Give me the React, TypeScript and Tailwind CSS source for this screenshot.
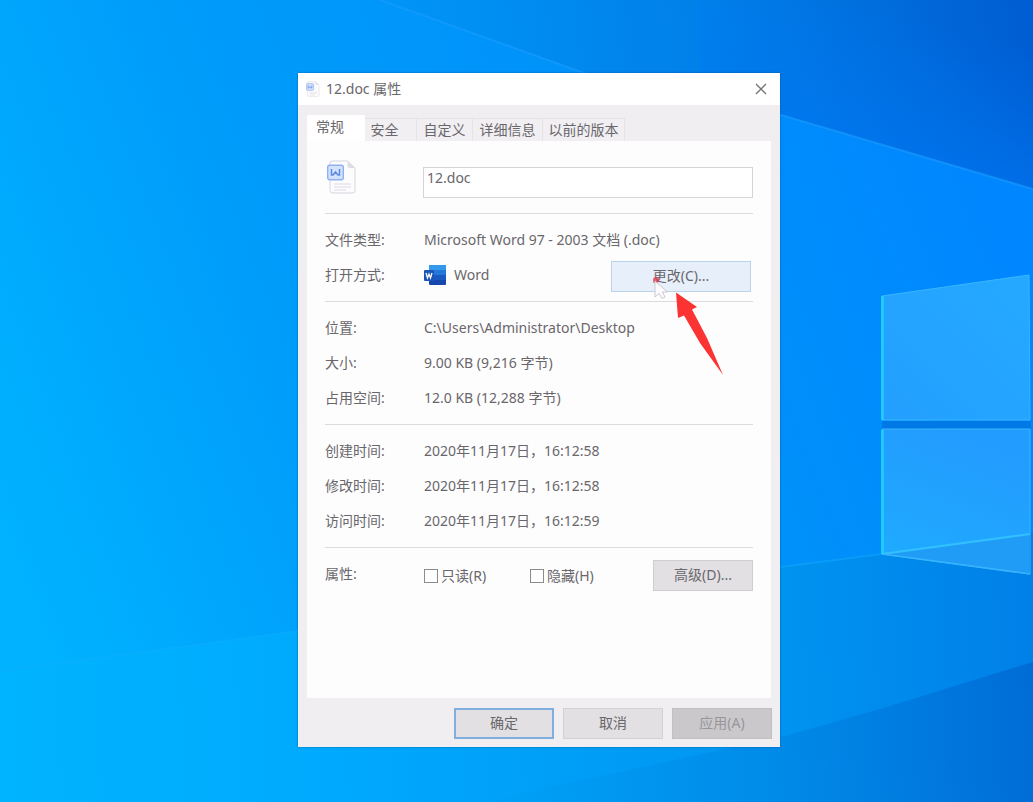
import { useState } from "react";

const tabs = [
  { name: "常规", width: "w-[58px]" },
  { name: "安全", width: "w-[52px]" },
  { name: "自定义", width: "w-14" },
  { name: "详细信息", width: "w-[70px]" },
  { name: "以前的版本", width: "w-[82px]" },
];

function Wallpaper() {
  return (
    <svg
      className="absolute inset-0 h-full w-full"
      viewBox="0 0 1033 802"
      preserveAspectRatio="none"
      aria-hidden="true"
    >
      <defs>
        <linearGradient id="sky" x1="0" y1="0.65" x2="1" y2="0.35">
          <stop offset="0" stopColor="#00b2ff" />
          <stop offset="0.3" stopColor="#009dfa" />
          <stop offset="0.7" stopColor="#0091fa" />
          <stop offset="1" stopColor="#0086ff" />
        </linearGradient>
        <linearGradient id="upper" gradientUnits="userSpaceOnUse" x1="400" y1="80" x2="1033" y2="0">
          <stop offset="0" stopColor="#0095f6" />
          <stop offset="0.5" stopColor="#007fe9" />
          <stop offset="1" stopColor="#005cd2" />
        </linearGradient>
        <linearGradient id="upperGlow" gradientUnits="userSpaceOnUse" x1="920" y1="20" x2="880" y2="180">
          <stop offset="0" stopColor="#0078f4" stopOpacity="0" />
          <stop offset="1" stopColor="#0078f4" stopOpacity="0.7" />
        </linearGradient>
        <linearGradient id="lower" gradientUnits="userSpaceOnUse" x1="0" y1="700" x2="1033" y2="660">
          <stop offset="0" stopColor="#00b4ff" />
          <stop offset="0.35" stopColor="#00a8fd" />
          <stop offset="0.75" stopColor="#0094f0" />
          <stop offset="1" stopColor="#0080e8" />
        </linearGradient>
        <linearGradient id="floor" gradientUnits="userSpaceOnUse" x1="480" y1="780" x2="1033" y2="740">
          <stop offset="0" stopColor="#00a2f8" />
          <stop offset="0.55" stopColor="#008ae8" />
          <stop offset="1" stopColor="#006dd6" />
        </linearGradient>
        <linearGradient id="paneTop" x1="0" y1="1" x2="1" y2="0">
          <stop offset="0" stopColor="#239fff" />
          <stop offset="1" stopColor="#25a9ff" />
        </linearGradient>
        <linearGradient id="paneBottom" x1="0" y1="1" x2="0.4" y2="0">
          <stop offset="0" stopColor="#1eacff" />
          <stop offset="1" stopColor="#239cff" />
        </linearGradient>
      </defs>
      <rect width="1033" height="802" fill="url(#sky)" />
      <path d="M380 0H1033V189L781 115L640 93Z" fill="url(#upper)" />
      <path d="M700 0H1033V189L781 115L700 102Z" fill="url(#upperGlow)" />
      <path d="M380 0L640 93L781 115L1033 189" fill="none" stroke="#1a9cff" strokeWidth="2" opacity="0.6" />
      <path d="M0 671L298 631L781 567L882 554L1033 533V802H0Z" fill="url(#lower)" />
      <path d="M0 671L298 631L781 567L882 554" fill="none" stroke="#12b0ff" strokeWidth="2" opacity="0.4" />
      <path d="M480 802L781 737L880 709L1033 662V802Z" fill="url(#floor)" />
      <path d="M882 421H1031V429H882Z" fill="#0078e6" />
      <path d="M882 296L1029 275L1030 420H882Z" fill="url(#paneTop)" stroke="#38b6ff" strokeWidth="1" />
      <path d="M882 429H1030V574L882 554Z" fill="url(#paneBottom)" stroke="#38b6ff" strokeWidth="1" />
      <path d="M882 554L1030 534V574Z" fill="#209cf6" />
      <path d="M882 554L1030 534" stroke="#32c0ff" strokeWidth="2" />
      <path d="M882 554L1030 574" stroke="#38b4ff" strokeWidth="1.5" />
      <path d="M882.500 296V420M882.500 430V554" stroke="#22d0ff" strokeWidth="2.500" />
    </svg>
  );
}

function DocIcon({ className }: { className: string }) {
  return (
    <svg className={className} viewBox="0 0 30 34" fill="none" aria-hidden="true">
      <path d="M5 1H20.500L28 8V30.500Q28 33 25.500 33H5.500Q3 33 3 30.500V3Q3 1 5 1Z" fill="#fcfbfd" stroke="#d6d5dc" />
      <path d="M20.500 1V6Q20.500 8 22.500 8H28Z" fill="#dedde4" />
      <path d="M7 24H24M7 27H24M7 30H19" stroke="#dcd9df" />
      <rect x="0.700" y="5.200" width="15.600" height="14.600" rx="2" fill="#d3e3fd" stroke="#8fb1ef" strokeWidth="1.400" />
      <path d="M4.500 9V15H6L8.500 12L11 15H12.500V9" stroke="#5b88e3" strokeWidth="1.500" />
    </svg>
  );
}

function WordIcon() {
  return (
    <svg className="h-[22px] w-[22px] shrink-0" viewBox="0 0 22 22" fill="none" aria-hidden="true">
      <rect x="5" y="1" width="17" height="20" rx="1" fill="#1547ac" />
      <path d="M5 2Q5 1 6 1H21Q22 1 22 2V6H5Z" fill="#3399ea" />
      <path d="M5 6H22V11H5Z" fill="#2379d8" />
      <path d="M5 11H22V16H5Z" fill="#185ac0" />
      <rect x="0" y="6" width="10" height="11" rx="1" fill="#1c55b8" />
      <path d="M2 9L3.500 14L5 10L6.500 14L8 9" stroke="#fff" strokeWidth="1.300" />
    </svg>
  );
}

function Row({ label, children }: { label: string; children: React.ReactNode }) {
  return (
    <div className="flex h-[35px] items-center">
      <dt className="w-[99px] shrink-0">{label}</dt>
      <dd className="flex min-w-0 flex-1 items-center">{children}</dd>
    </div>
  );
}

const group = "border-t border-[#dcdadc] pt-2 pb-[9px]";
const button = "flex h-[31px] items-center justify-center pb-0.5";

export default function App() {
  const [active, setActive] = useState("常规");
  return (
    <main className="relative min-h-screen overflow-hidden bg-[#0094f8] font-['Noto_Sans','Noto_Sans_CJK_SC',sans-serif] text-sm leading-5 text-[#69676b]">
      <Wallpaper />
      <section
        aria-label="12.doc 属性"
        className="absolute top-[73px] left-[298px] flex w-[482px] flex-col bg-[#f0eef1] shadow-[0_0_2px_rgba(0,60,120,0.6)]"
      >
        <header className="flex h-8 items-center bg-white pr-3 pl-2">
          <DocIcon className="h-4 w-[14px]" />
          <h1 className="ml-1.5 flex-1">12.doc 属性</h1>
          <button type="button" aria-label="关闭" className="p-px">
            <svg className="h-3 w-3" viewBox="0 0 12 12" aria-hidden="true">
              <path d="M1 1L11 11M11 1L1 11" stroke="#757376" strokeWidth="1.300" />
            </svg>
          </button>
        </header>

        <div className="px-[9px] pt-2.5">
          <div role="tablist" className="flex h-[26px] items-end">
            {tabs.map((t) => (
              <button
                key={t.name}
                type="button"
                role="tab"
                aria-selected={active === t.name}
                onClick={() => setActive(t.name)}
                className={`${t.width} shrink-0 ${
                  active === t.name
                    ? "h-[26px] bg-white pr-3 pb-0.5"
                    : "h-[23px] border-t border-r border-[#e6e3e7] bg-[#f1eff2]"
                } ${t.name === "安全" ? "pr-3" : ""}`}
              >
                {t.name}
              </button>
            ))}
          </div>

          <div role="tabpanel" className="flex h-[557px] flex-col bg-[#fefdfe] px-[18px]">
            <div className="flex h-[72px] pt-[19px]">
              <DocIcon className="ml-0.5 h-[34px] w-[30px]" />
              <input
                aria-label="文件名"
                defaultValue="12.doc"
                className="mt-[7px] ml-[66px] h-[31px] min-w-0 flex-1 border border-[#d6d4d7] bg-white pr-1 pb-2.5 pl-[3px] outline-none"
              />
            </div>
            <dl>
              <div className={group}>
                <Row label="文件类型:">Microsoft Word 97 - 2003 文档 (.doc)</Row>
                <Row label="打开方式:">
                  <WordIcon />
                  <span className="ml-2 flex-1">Word</span>
                  <button type="button" className={`${button} mt-1 mr-0.5 w-[140px] border border-[#b9d3ec] bg-[#e6effa]`}>
                    更改(C)...
                  </button>
                </Row>
              </div>
              <div className={group}>
                <Row label="位置:">C:\Users\Administrator\Desktop</Row>
                <Row label="大小:">9.00 KB (9,216 字节)</Row>
                <Row label="占用空间:">12.0 KB (12,288 字节)</Row>
              </div>
              <div className={group}>
                <Row label="创建时间:">2020年11月17日，16:12:58</Row>
                <Row label="修改时间:">2020年11月17日，16:12:58</Row>
                <Row label="访问时间:">2020年11月17日，16:12:59</Row>
              </div>
              <div className={group}>
                <Row label="属性:">
                  <div className="mt-1 flex flex-1 items-center">
                    <label className="flex w-[106px] items-center gap-[3px]">
                      <input type="checkbox" className="h-3.5 w-3.5 appearance-none border border-[#8d8b8e] bg-white checked:bg-[#4b7bdf]" />
                      只读(R)
                    </label>
                    <label className="flex flex-1 items-center gap-[3px]">
                      <input type="checkbox" className="h-3.5 w-3.5 appearance-none border border-[#8d8b8e] bg-white checked:bg-[#4b7bdf]" />
                      隐藏(H)
                    </label>
                    <button type="button" className={`${button} w-[100px] border border-[#cfcdd0] bg-[#e2e0e3]`}>
                      高级(D)...
                    </button>
                  </div>
                </Row>
              </div>
            </dl>
          </div>
        </div>

        <footer className="flex justify-end gap-[9px] pt-2.5 pr-2 pb-2">
          <button type="button" className={`${button} w-[100px] border-2 border-[#80aede] bg-[#e2e0e3]`}>
            确定
          </button>
          <button type="button" className={`${button} w-[100px] border border-[#d3d1d4] bg-[#e2e0e3]`}>
            取消
          </button>
          <button type="button" disabled className={`${button} w-[100px] border border-[#c2c0c3] bg-[#cac8cb] text-[#98969a]`}>
            应用(A)
          </button>
        </footer>
      </section>

      <svg className="pointer-events-none absolute top-[272px] left-[650px] h-[106px] w-[76px]" viewBox="0 0 76 106" aria-hidden="true">
        <circle cx="6" cy="8" r="3" fill="#e33b52" opacity="0.8" />
        <path d="M5 9V25L9 21.500L12 26.500L15 25L12.500 20H17.500Z" fill="#fbfafc" stroke="#cbc9ce" />
        <path d="M26 20.500L47 35L42 37.500L57 66L73 103L50 71L34 43.500L28 46Z" fill="#fb3433" />
      </svg>
    </main>
  );
}
